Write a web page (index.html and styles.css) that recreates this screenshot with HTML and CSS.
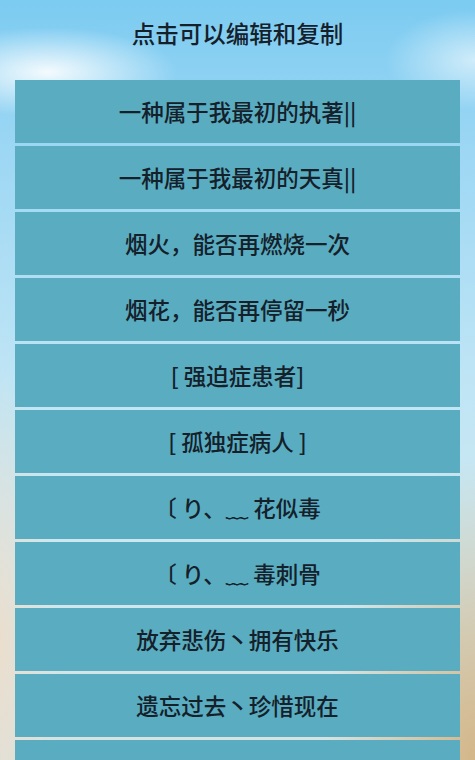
FILE: index.html
```html
<!DOCTYPE html>
<html lang="zh-CN">
  <head>
    <meta charset="UTF-8" />
    <meta name="viewport" content="width=device-width, initial-scale=1.0" />
    <title>点击可以编辑和复制</title>
    <link rel="stylesheet" href="styles.css">
  </head>
  <body>
    <h1 class="title">点击可以编辑和复制</h1>

    <ul class="name-list">
      <li class="name-item">一种属于我最初的执著||</li>
      <li class="name-item">一种属于我最初的天真||</li>
      <li class="name-item">烟火，能否再燃烧一次</li>
      <li class="name-item">烟花，能否再停留一秒</li>
      <li class="name-item">[ 强迫症患者]</li>
      <li class="name-item">[ 孤独症病人 ]</li>
      <li class="name-item">〔 り、﹏ 花似毒</li>
      <li class="name-item">〔 り、﹏ 毒刺骨</li>
      <li class="name-item">放弃悲伤丶拥有快乐</li>
      <li class="name-item">遗忘过去丶珍惜现在</li>
      <li class="name-item"></li>
    </ul>
  </body>
</html>
```

FILE: styles.css
```css
html {
  background-color: #a8dcf4;
  background-image:
    radial-gradient(ellipse 150px 300px at 100% 100%, rgba(212, 180, 132, 0.95), rgba(212, 180, 132, 0)),
    radial-gradient(ellipse 60px 280px at 0% 85%, rgba(236, 222, 204, 0.95), rgba(236, 222, 204, 0)),
    radial-gradient(ellipse 130px 45px at 10% 72px, rgba(255, 255, 255, 0.9), rgba(255, 255, 255, 0)),
    radial-gradient(ellipse 90px 50px at 100% 60px, rgba(255, 255, 255, 0.6), rgba(255, 255, 255, 0)),
    linear-gradient(#7ccbf1 0, #9dd7f4 20%, #bfe5f5 50%, #cfe8f0 75%, #d8e2e0 100%);
  background-attachment: fixed;
}

body {
  margin: 0;
  font-family: "Noto Sans CJK SC", "Noto Sans", sans-serif;
  color: #14202a;
}

.title {
  margin: 0 0 14px;
  height: 66px;
  line-height: 66px;
  text-align: center;
  font-size: 23.5px;
  font-weight: 500;
}

.name-list {
  list-style: none;
  margin: 0 15px;
  padding: 0;
  display: flex;
  flex-direction: column;
  gap: 3px;
}

.name-item {
  height: 63px;
  line-height: 63px;
  background: #5aacc0;
  text-align: center;
  font-size: 22.5px;
  font-weight: 500;
  white-space: nowrap;
}
```
